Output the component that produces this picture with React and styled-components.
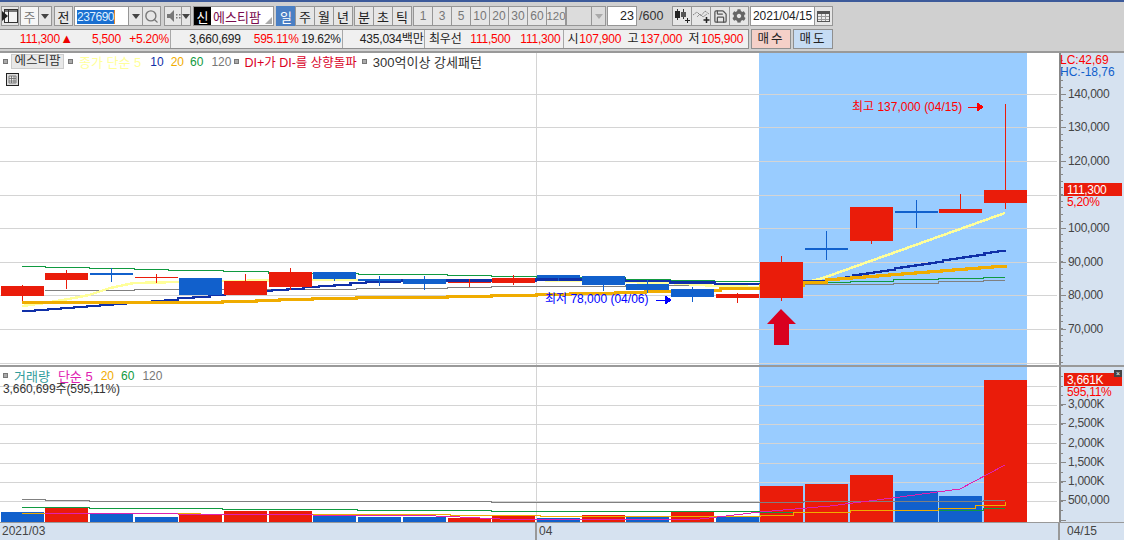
import React from 'react';
import styled, { createGlobalStyle } from 'styled-components';
import { Search, Save } from 'lucide-react';
import { FaCog } from 'react-icons/fa';

const Global = createGlobalStyle`
  html, body { margin: 0; padding: 0; background: #d0d0d0; overflow: hidden; }
  #root { width: 1124px; height: 540px; }
  * { box-sizing: border-box; }
`;
const FONT = `"Liberation Sans", "Noto Sans CJK KR", sans-serif`;

const Page = styled.div`
  width: 1124px; height: 540px; display: flex; flex-direction: column;
  font-family: ${FONT}; font-size: 12px; color: #222; background: #d0d0d0;
  border-top: 2px solid #3c5a9a;
`;
const Toolbar = styled.div`
  height: 27px; padding: 4px 0 0 1px; display: flex; align-items: flex-start;
`;
const Group = styled.div`
  display: flex; margin-right: ${p => p.$mr ?? 2}px;
`;
const Btn = styled.div`
  flex: none; width: ${p => p.$w ?? 20}px; height: 20px; display: flex; align-items: center; justify-content: center;
  background: ${p => p.$active ? '#4a7fc4' : p.$bg ?? '#e6e6e6'};
  color: ${p => p.$active ? '#fff' : p.$muted ? '#777' : '#222'};
  border: 1px solid ${p => p.$active ? '#4a7fc4' : '#969696'};
  margin-right: -1px; font-size: ${p => p.$fs ?? 13}px; overflow: hidden; white-space: nowrap;
`;
const Arrow = styled.span`
  width: 0; height: 0; border-left: 4px solid transparent; border-right: 4px solid transparent;
  border-top: 5px solid ${p => p.$c ?? '#444'}; 
`;
const CodeInput = styled.div`
  flex: none; width: 55px; height: 20px; background: #fff; border: 1px solid #969696; padding: 1px 0 0 2px; margin-right: -1px;
  display: flex; align-items: center;
`;
const Selected = styled.span`
  background: #1a6fd0; color: #dfefff; font-size: 12px; line-height: 14px; border-right: 1px solid #e08a30; letter-spacing: -.5px;
`;
const NameBox = styled.div`
  width: 81px; height: 20px; background: #fff; border: 1px solid #969696; display: flex; position: relative; color: #7a0c4e; font-size: 13px; align-items: center;
`;
const NewMark = styled.span`
  width: 17px; height: 18px; background: #000; color: #fff; display: flex; align-items: center; justify-content: center; margin-right: 2px;
`;
const Corner = styled.span`
  position: absolute; right: 1px; bottom: 1px; width: 0; height: 0; border-left: 7px solid transparent; border-bottom: 7px solid #aaa;
`;
const NumInput = styled.div`
  flex: none; width: 30px; height: 20px; background: #fff; border: 1px solid #969696; text-align: right; padding-right: 2px; line-height: 18px; font-size: 12.5px;
`;
const Total = styled.span`
  flex: none; width: 35px; line-height: 20px; color: #333; font-size: 12.5px; padding-left: 2px;
`;
const DateBox = styled.div`
  flex: none; width: 65px; height: 20px; background: #fff; border: 1px solid #969696; line-height: 18px; padding-left: 2px; margin-right: -1px; font-size: 12px; letter-spacing: -.1px;
`;
const InfoRow = styled.div`
  height: 20px; display: flex; align-items: flex-start; padding-left: 0;
`;
const InfoBar = styled.div`
  display: flex; width: 749px; height: 20px; border: 1px solid #8f8f8f; border-left: 0; background: #f0f0f0; margin-right: 2px;
`;
const Cell = styled.div`
  display: flex; width: ${p => p.$w}px; height: 18px; line-height: 18px; border-right: ${p => p.$last ? 0 : 1}px solid #a8a8a8; white-space: nowrap;
`;
const Val = styled.span`
  display: inline-block; width: ${p => p.$w}px; text-align: right; color: ${p => p.$c ?? '#222'}; letter-spacing: -.2px; font-size: ${p => p.$fs ?? 12}px;
`;
const Trade = styled.div`
  width: 40px; height: 20px; background: ${p => p.$bg}; border: 1px solid #8f8f8f; margin-right: 2px; text-align: center; line-height: 18px; letter-spacing: 2px; font-size: 12.5px;
`;
const Charts = styled.div`
  margin-top: 2px; border-top: 2px solid #999; display: flex; flex-direction: column; background: #fff; flex: 1;
`;
const Pane = styled.div`
  display: flex; height: ${p => p.$h}px; flex: none; position: relative;
  border-bottom: ${p => p.$line ? '2px solid #999' : 0};
`;
const Plot = styled.svg`
  display: block; width: 1059px; height: 100%; flex: none; background: #fff;
  text { font-family: ${FONT}; font-size: 12px; }
`;
const Axis = styled.svg`
  display: block; width: 65px; height: 100%; flex: none; background: #d6e2f0;
  text { font-family: ${FONT}; font-size: 12px; fill: #444; letter-spacing: -.3px; }
`;
const Legend = styled.div`
  position: absolute; left: 3px; top: 1px; display: flex; align-items: center; height: 15px; white-space: nowrap; font-size: 13px;
`;
const Dot = styled.span`
  flex: none; width: 5px; height: 5px; background: #aaa; border: 1px solid #777; margin: ${p => p.$m ?? '0 3px 0 4px'};
`;
const Tag = styled.span`
  flex: none; background: #e8e8e8; border: 1px solid #ccc; height: 15px; line-height: 13px; color: #333; width: 53px; margin-right: 1px; text-align: center; font-size: 12.500px;
`;
const Item = styled.span`
  color: ${p => p.$c}; margin-right: ${p => p.$mr ?? 6}px; font-size: ${p => p.$fs ?? 13}px;
`;
const GridBtn = styled.svg`
  position: absolute; left: 6px; top: 20px; width: 13px; height: 13px;
`;
const Close = styled.span`
  position: absolute; right: 2px; top: 3px; width: 8px; height: 7px; background: #444; color: #fff; font-size: 7px; line-height: 7px; text-align: center;
`;
const VolLegend = styled.div`
  position: absolute; left: 3px; top: 1px; white-space: nowrap; font-size: 12px;
`;
const VolLine1 = styled.div`
  display: flex; align-items: center; height: 15px;
`;
const VolLine2 = styled.div`
  color: #333; height: 13px; line-height: 13px; letter-spacing: -.1px;
`;
const TimeAxis = styled.div`
  height: 18px; background: #d6e2f0; border-top: 1px solid #999; display: flex; color: #444; font-size: 12px; line-height: 17px;
`;
const TimeCell = styled.div`
  width: ${p => p.$w}px; padding-left: ${p => p.$pl ?? 2}px; border-right: ${p => p.$b ? 2 : 0}px solid #999;
`;

const RED = '#ea1c0a';
const BLUE = '#1160cc';
const slotX = i => Math.round(0.5 + i * 44.7);
// [top, bottom, wickTop, wickBottom, up?]
const candles = [
  [286, 296, 285, 301, 1], [273, 280, 270, 289, 1], [273, 275, 268, 282, 0], [277, 278, 274, 283, 1],
  [278, 295, 278, 295, 0], [281, 295, 274, 295, 1], [272, 287, 268, 290, 1], [272, 279, 272, 281, 0],
  [279, 281, 276, 286, 0], [279, 284, 276, 290, 0], [282, 283, 279, 287, 1], [278, 283, 275, 285, 1],
  [275, 278, 275, 281, 0], [276, 285, 276, 291, 0], [284, 290, 280, 293, 0], [289, 297, 287, 302, 0],
  [294, 298, 293, 303, 1], [262, 298, 256, 301, 1], [248, 250, 231, 260, 0], [207, 241, 207, 244, 1],
  [211, 213, 200, 228, 0], [209, 213, 194, 213, 1], [190, 203, 104, 209, 1],
];
const vols = [[512,0],[507,1],[514,0],[517,0],[514,1],[511,1],[511,1],[516,0],[517,0],[517,0],[518,1],[516,1],[517.5,0],[515,1],[517,0],[511,1],[517,0],[486,1],[484,1],[475,1],[491,0],[496,0],[380,1]];

const stepPts = pts => {
  let out = [];
  for (let i = 0; i < pts.length; i++) {
    const [x, y] = pts[i];
    if (i > 0) out.push(`${x},${pts[i - 1][1]}`);
    out.push(`${x},${y}`);
  }
  return out.join(' ');
};
const linPts = pts => pts.map(p => p.join(',')).join(' ');
const ramp = (x0, y0, x1, y1, n) => {
  const r = [];
  for (let i = 0; i <= n; i++) r.push([x0 + (x1 - x0) * i / n, Math.round(y0 + (y1 - y0) * i / n)]);
  return r;
};

const priceLines = {
  gray: [[45,290.5],[89,290],[134,289.5],[268,289],[356,288],[447,287],[491,286],[625,285],[714,284.5],[803,284.5],[893,283],[938,281.5],[983,280.5],[1005,280.5]],
  green: [[22,266.5],[45,267.5],[89,268.5],[134,269.5],[168,270.5],[223,271.5],[268,273.5],[358,274.5],[447,275],[491,276],[536,277],[625,279],[670,280],[714,281],[803,282],[850,281],[893,279.5],[938,278.5],[983,277.5],[1005,277.5]],
  blue: [...ramp(22,311,178,299,12), ...ramp(178,298,366,282,12), [400,280.5],[536,279.5],[625,281],[670,282.5],[715,284],[760,284],[803,281], ...ramp(826,280,1005,250,26)],
  yellow: [[22,306],[45,303],[66,299.5],[89,295],[110,288],[134,283],[178,282],[290,280],[533,280],[580,281],[670,283],[716,286],[759,287],[803,283],[823,278],[1005,213]],
  orange: [[22,302],[178,302],[222,301],[256,300],[279,299],[312,298],[356,297],[447,296],[491,295],[536,294],[570,293],[615,292],[645,291],[690,290],[720,288],[760,285],[803,282],...ramp(826,279,1005,265,14)],
};
const volLines = {
  gray: [[22,499.5],[45,500.5],[89,501.5],[491,502.5],[803,501.5],[983,500.5],[1005,500.5]],
  green: [[22,507.5],[89,508.5],[222,509.5],[357,510.5],[491,511.5],[760,512],[850,510.5],[983,508.5],[1005,508.5]],
  orange: [[22,513.5],[200,514],[450,515],[540,516],[760,515],[793,512.5],[850,510.5],[938,508],[975,505],[1005,502]],
  magenta: [[45,513],[178,514],[313,515],[436,516],[460,517],[500,519],[700,519],[760,512],[830,506],[900,497],[960,489],[1005,465]],
};
const priceGrid = [94, 127, 161, 195, 228, 262, 295, 329];
const priceLabels = ['140,000','130,000','120,000','110,000','100,000','90,000','80,000','70,000'];
const volGrid = [386, 405, 424, 443, 463, 482, 501];
const volLabels = [[404,'3,000K'],[423,'2,500K'],[443,'2,000K'],[462,'1,500K'],[481,'1,000K'],[500,'500,000']];

function PlotBg({ grid, y0, y1 }) {
  return (
    <g shapeRendering="crispEdges">
      <rect x="759" y={y0} width="268" height={y1 - y0} fill="#99ccff" />
      {grid.map(y => <line key={y} x1="0" x2="1057" y1={y + .5} y2={y + .5} stroke="#d4d4d4" />)}
      <line x1="536.5" x2="536.5" y1={y0} y2={y1} stroke="#d4d4d4" />
    </g>
  );
}
function SmallArrow({ x, y, c }) {
  return <path d={`M${x} ${y}h10M${x + 9} ${y - 4}l6 4-6 4z`} stroke={c} fill={c} strokeWidth="1" shapeRendering="crispEdges" />;
}
function Grid() {
  return (
    <GridBtn viewBox="0 0 13 13">
      <rect x=".5" y=".5" width="12" height="12" fill="#ddd" stroke="#222" />
      <path d="M3 3h7v7H3zM3 5.5h7M3 8h7M5.5 3v7M8 3v7" fill="#eee" stroke="#666" strokeWidth=".8" />
    </GridBtn>
  );
}
const IconLayout = () => (
  <svg width="16" height="14" viewBox="0 0 16 14">
    <rect x="2.5" y=".5" width="13" height="13" fill="#f4f4f4" stroke="#333" />
    <rect x="3" y="1" width="12" height="2" fill="#777" />
    <path d="M0 2l6 5-6 5z" fill="#222" /><path d="M6.5 1v12" stroke="#333" />
  </svg>
);
const IconSpeaker = () => (
  <svg width="15" height="14" viewBox="0 0 15 14">
    <path d="M1 5h3l4-4v12l-4-4H1z" fill="#777" />
    <path d="M10 5h1.500v1.500H10zM13 5h1.500v1.500H13zM10 8h1.500v1.500H10zM13 8h1.500v1.500H13z" fill="#777" />
  </svg>
);
const IconCandle = () => (
  <svg width="16" height="14" viewBox="0 0 16 14" shapeRendering="crispEdges">
    <path d="M3.5 0v11M9.5 0v10" stroke="#333" />
    <rect x="1" y="2" width="5" height="7" fill="#222" />
    <rect x="7" y="3" width="5" height="5" fill="#555" />
    <path d="M13.500 9v5M11 11.500h5" stroke="#222" strokeWidth="1.400" />
  </svg>
);
const IconLine = () => (
  <svg width="17" height="14" viewBox="0 0 17 14">
    <path d="M0 6l4-3 4 4 4-5 4 3" stroke="#666" fill="none" strokeWidth=".8" strokeDasharray="1.500 .6" />
    <path d="M4 8l3-3 3 3 4-3" stroke="#888" fill="none" strokeWidth=".8" />
    <path d="M13.500 8v6M10.500 11h6" stroke="#222" strokeWidth="1.500" />
  </svg>
);
const IconCal = () => (
  <svg width="13" height="12" viewBox="0 0 13 12" shapeRendering="crispEdges">
    <rect x=".5" y="1.500" width="12" height="10" fill="#eee" stroke="#555" />
    <rect x="1" y="2" width="11" height="2" fill="#555" />
    <path d="M1 6.500h11M1 9h11M4.500 4v7M8.500 4v7" stroke="#999" />
  </svg>
);

export default function App() {
  return (
    <Page>
      <Global />
      <Toolbar>
        <Group><Btn $w={18}><IconLayout /></Btn></Group>
        <Group $mr={3}><Btn $w={19} $bg="#f6f6f6" $muted>주</Btn><Btn $w={14}><Arrow /></Btn></Group>
        <Group $mr={2}><Btn $w={19}>전</Btn></Group>
        <Group $mr={4}>
          <CodeInput><Selected>237690</Selected></CodeInput>
          <Btn $w={15}><Arrow /></Btn>
          <Btn $w={19}><Search size={15} color="#777" strokeWidth={2.2} /></Btn>
        </Group>
        <Group $mr={3}><Btn $w={18}><IconSpeaker /></Btn><Btn $w={10}><Arrow $c="#444" /></Btn></Group>
        <Group $mr={2}>
          <NameBox><NewMark>신</NewMark>에스티팜<Corner /></NameBox>
        </Group>
        <Group $mr={2}>
          <Btn $active>일</Btn><Btn>주</Btn><Btn>월</Btn><Btn>년</Btn>
        </Group>
        <Group $mr={2}>
          <Btn>분</Btn><Btn>초</Btn><Btn>틱</Btn>
        </Group>
        <Group $mr={1}>
          {['1','3','5','10','20','30','60'].map(t => <Btn key={t} $muted $fs={12}>{t}</Btn>)}
          <Btn $muted $fs={11.5}>120</Btn>
        </Group>
        <Group $mr={2}>
          <Btn $w={26} $bg="#dcdcdc" />
          <Btn $w={15} $bg="#dcdcdc"><Arrow $c="#aaa" /></Btn>
        </Group>
        <NumInput>23</NumInput>
        <Total>/600</Total>
        <Group $mr={2}>
          <Btn><IconCandle /></Btn>
          <Btn><IconLine /></Btn>
          <Btn><Save size={15} color="#555" /></Btn>
          <Btn><FaCog size={14} color="#666" /></Btn>
        </Group>
        <Group $mr={0}>
          <DateBox>2021/04/15</DateBox>
          <Btn $w={19}><IconCal /></Btn>
        </Group>
      </Toolbar>
      <InfoRow>
        <InfoBar>
          <Cell $w={171}>
            <Val $w={60} $c="#f00">111,300</Val>
            <Val $w={13} $c="#e00" $fs={13}>▲</Val>
            <Val $w={48} $c="#f00">5,500</Val>
            <Val $w={48} $c="#f00">+5.20%</Val>
          </Cell>
          <Cell $w={172}>
            <Val $w={70}>3,660,699</Val>
            <Val $w={58} $c="#f00">595.11%</Val>
            <Val $w={42}>19.62%</Val>
          </Cell>
          <Cell $w={82}><Val $w={81}>435,034백만</Val></Cell>
          <Cell $w={140}>
            <Val $w={37}>최우선</Val>
            <Val $w={49} $c="#f00">111,500</Val>
            <Val $w={50} $c="#f00">111,300</Val>
          </Cell>
          <Cell $w={184} $last>
            <Val $w={14}>시</Val>
            <Val $w={43} $c="#f00">107,900</Val>
            <Val $w={17}>고</Val>
            <Val $w={44} $c="#f00">137,000</Val>
            <Val $w={17}>저</Val>
            <Val $w={44} $c="#f00">105,900</Val>
          </Cell>
        </InfoBar>
        <Trade $bg="#f5d0c8">매수</Trade>
        <Trade $bg="#c6dcf4">매도</Trade>
      </InfoRow>
      <Charts>
        <Pane $h={314} $line>
          <Plot viewBox="0 53 1059 312">
            <PlotBg grid={[...priceGrid, 363]} y0={53} y1={365} />
            <g fill="none" shapeRendering="crispEdges">
              <polyline points={stepPts(priceLines.gray)} stroke="#808080" />
              <polyline points={stepPts(priceLines.green)} stroke="#109a40" />
              <polyline points={linPts(priceLines.yellow)} stroke="#ffff9a" strokeWidth="2.500" />
              <polyline points={stepPts(priceLines.blue)} stroke="#1030a8" strokeWidth="2.500" />
              <polyline points={stepPts(priceLines.orange)} stroke="#f0ac00" strokeWidth="3" />
            </g>
            <g shapeRendering="crispEdges">
              {candles.map((c, i) => {
                const x = slotX(i);
                const col = c[4] ? RED : BLUE;
                return (
                  <g key={i}>
                    <line x1={x + 21.5} x2={x + 21.5} y1={c[2]} y2={c[3]} stroke={col} />
                    <rect x={x} y={c[0]} width="43" height={c[1] - c[0]} fill={col} />
                  </g>
                );
              })}
            </g>
            <text x="852" y="111" fill="#f00">최고 137,000 (04/15)</text>
            <SmallArrow x={968} y={107} c="#f00" />
            <text x="545" y="303" fill="#00f">최저 78,000 (04/06)</text>
            <SmallArrow x={656} y={300} c="#00f" />
            <path d="M781 309l15 15h-7v21h-15v-21h-7z" fill="#d9001f" />
          </Plot>
          <Axis viewBox="1059 53 65 312">
            <g shapeRendering="crispEdges" stroke="#888">
              <line x1="1059.500" x2="1059.500" y1="53" y2="365" strokeWidth="2" />
              {Array.from({ length: 46 }, (_, k) => 60 + k * 6.7).map(y => <line key={y} x1="1059" x2="1063" y1={Math.round(y) + .5} y2={Math.round(y) + .5} />)}
              {priceGrid.map(y => <line key={y} x1="1059" x2="1066" y1={y + .5} y2={y + .5} />)}
            </g>
            <text x="1060" y="64" style={{ fill: '#f00', letterSpacing: 0 }}>LC:42,69</text>
            <text x="1060" y="76" style={{ fill: '#1160cc', letterSpacing: 0 }}>HC:-18,76</text>
            {priceLabels.map((t, i) => i === 3 ? null : <text key={t} x="1068" y={priceGrid[i] + 4}>{t}</text>)}
            <rect x="1064" y="183" width="58" height="13" fill={RED} />
            <text x="1067" y="194" style={{ fill: '#fff' }}>111,300</text>
            <text x="1067" y="206" style={{ fill: '#f00' }}>5,20%</text>
          </Axis>
          <Legend>
            <Dot $m="0 3px 0 0" />
            <Tag>에스티팜</Tag>
            <Dot $m="0 6px 0 3px" />
            <Item $c="#ffff9a" $mr={9}>종가 단순 5</Item>
            <Item $c="#1030a8" $mr={7} $fs={12}>10</Item>
            <Item $c="#f0ac00" $mr={6} $fs={12}>20</Item>
            <Item $c="#109a40" $mr={8} $fs={12}>60</Item>
            <Item $c="#777" $mr={3} $fs={12}>120</Item>
            <Dot $m="0 5px 0 0" />
            <Item $c="#d9001f" $mr={5} $fs={12.5}>DI+가 DI-를 상향돌파</Item>
            <Dot $m="0 6px 0 0" />
            <Item $c="#333">300억이상 강세패턴</Item>
          </Legend>
          <Grid />
        </Pane>
        <Pane $h={155}>
          <Plot viewBox="0 367 1059 155">
            <PlotBg grid={volGrid} y0={367} y1={522} />
            <g shapeRendering="crispEdges">
              {vols.map((v, i) => (
                <rect key={i} x={slotX(i)} y={v[0]} width="43" height={521.5 - v[0]} fill={v[1] ? RED : BLUE} />
              ))}
            </g>
            <g fill="none" shapeRendering="crispEdges" strokeWidth="1">
              <polyline points={stepPts(volLines.gray)} stroke="#808080" />
              <polyline points={stepPts(volLines.green)} stroke="#109a40" />
              <polyline points={stepPts(volLines.orange)} stroke="#f0ac00" />
              <polyline points={linPts(volLines.magenta)} stroke="#e020b0" />
            </g>
          </Plot>
          <Axis viewBox="1059 367 65 155">
            <g shapeRendering="crispEdges" stroke="#888">
              <line x1="1059.500" x2="1059.500" y1="367" y2="522" strokeWidth="2" />
              {Array.from({ length: 16 }, (_, k) => 376 + k * 9.6).map(y => <line key={y} x1="1059" x2="1063" y1={Math.round(y) + .5} y2={Math.round(y) + .5} />)}
              {volLabels.map(([y, t]) => <line key={t} x1="1059" x2="1066" y1={y + .5} y2={y + .5} />)}
              <line x1="1059" x2="1066" y1="520.500" y2="520.500" />
            </g>
            <rect x="1064" y="373" width="58" height="13" fill={RED} />
            <text x="1067" y="384" style={{ fill: '#fff' }}>3,661K</text>
            <text x="1067" y="396" style={{ fill: '#f00' }}>595,11%</text>
            {volLabels.map(([y, t]) => <text key={t} x="1068" y={y + 4}>{t}</text>)}
          </Axis>
          <VolLegend>
            <VolLine1>
              <Dot $m="0 6px 0 0" />
              <Item $c="#2f9c9c" $mr={8}>거래량</Item>
              <Item $c="#e020b0" $mr={8}>단순 5</Item>
              <Item $c="#f0ac00" $mr={7} $fs={12}>20</Item>
              <Item $c="#109a40" $mr={8} $fs={12}>60</Item>
              <Item $c="#777" $fs={12}>120</Item>
            </VolLine1>
            <VolLine2>3,660,699주(595,11%)</VolLine2>
          </VolLegend>
          <Close>×</Close>
        </Pane>
        <TimeAxis>
          <TimeCell $w={537} $b>2021/03</TimeCell>
          <TimeCell $w={523} $b>04</TimeCell>
          <TimeCell $w={64} $pl={7}>04/15</TimeCell>
        </TimeAxis>
      </Charts>
    </Page>
  );
}
